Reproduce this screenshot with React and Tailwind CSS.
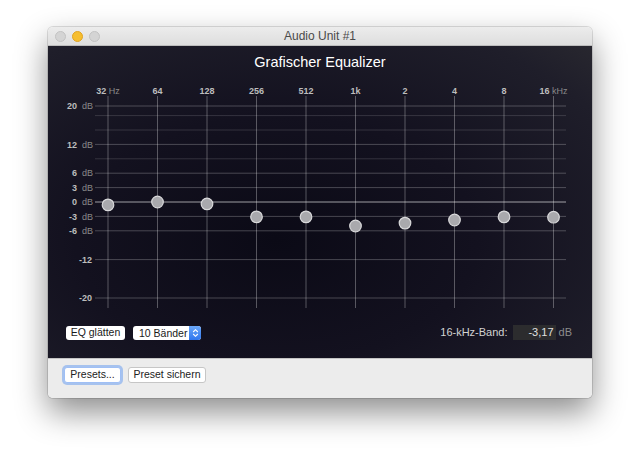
import React from "react";

const bands = [
  { n: "32", u: " Hz", v: -0.6 },
  { n: "64", v: 0 },
  { n: "128", v: -0.4 },
  { n: "256", v: -3.1 },
  { n: "512", v: -3.1 },
  { n: "1k", v: -5 },
  { n: "2", v: -4.4 },
  { n: "4", v: -3.75 },
  { n: "8", v: -3.1 },
  { n: "16", u: " kHz", v: -3.17 },
];

const yOf = (db) => 120 - 4.8 * db;

const labeled = [
  { db: 20, dB: true },
  { db: 12, dB: true },
  { db: 6, dB: true },
  { db: 3, dB: true },
  { db: 0, dB: true },
  { db: -3, dB: true },
  { db: -6, dB: true },
  { db: -12, dB: false },
  { db: -20, dB: false },
];
const extra = [18, 15, 9];

function Chart() {
  const xs = bands.map((_, i) => 60 + i * 49.5);
  return (
    <svg width="544" height="228" className="block" style={{ fontFamily: '"Liberation Sans", Arial, sans-serif' }}>
      {extra.map((d) => (
        <line key={"e" + d} x1="47" x2="518" y1={yOf(d)} y2={yOf(d)} stroke="rgba(255,255,255,0.14)" strokeWidth="1" />
      ))}
      {labeled.map((l) => (
        <line
          key={"l" + l.db}
          x1="47"
          x2="518"
          y1={yOf(l.db)}
          y2={yOf(l.db)}
          stroke={l.db === 0 ? "rgba(255,255,255,0.6)" : "rgba(255,255,255,0.24)"}
          strokeWidth="1"
        />
      ))}
      {xs.map((x, i) => (
        <line key={"v" + i} x1={x} x2={x} y1="14" y2="226" stroke="rgba(255,255,255,0.3)" strokeWidth="1" />
      ))}
      {bands.map((b, i) => (
        <text key={"t" + i} x={xs[i]} y="11.5" textAnchor="middle" fontSize="9" fontWeight="bold" fill="#bdbdbd">
          {b.n}
          {b.u && (
            <tspan fill="#8a8a8a" fontWeight="normal">
              {b.u}
            </tspan>
          )}
        </text>
      ))}
      {labeled.map((l) =>
        l.dB ? (
          <g key={"lt" + l.db}>
            <text x="29" y={yOf(l.db) + 3.2} textAnchor="end" fontSize="9" fontWeight="bold" fill="#bdbdbd">
              {l.db}
            </text>
            <text x="34" y={yOf(l.db) + 3.2} fontSize="9" fill="#8a8a8a">
              dB
            </text>
          </g>
        ) : (
          <text key={"lt" + l.db} x="44" y={yOf(l.db) + 3.2} textAnchor="end" fontSize="9" fontWeight="bold" fill="#bdbdbd">
            {l.db}
          </text>
        )
      )}
      {bands.map((b, i) => (
        <circle key={"k" + i} cx={xs[i]} cy={yOf(b.v)} r="5.8" fill="#a9a9ad" stroke="#d8d8da" strokeWidth="1.2" />
      ))}
    </svg>
  );
}

export default function App() {
  return (
    <div
      className="w-[640px] h-[467px] bg-white pt-[27px] pl-[48px] overflow-hidden"
      style={{ fontFamily: '"Liberation Sans", Arial, sans-serif' }}
    >
      <div className="w-[544px] h-[371px] rounded-[5px] overflow-hidden flex flex-col shadow-[0_14px_32px_rgba(0,0,0,0.45),0_0_0_1px_rgba(0,0,0,0.12)]">
        {/* title bar */}
        <div className="h-[19px] shrink-0 bg-gradient-to-b from-[#ececec] to-[#dedede] border-b border-[#bdbdbd] relative flex items-center">
          <div className="flex gap-[6px] pl-[7px]">
            <div className="w-[11px] h-[11px] rounded-full bg-[#d4d4d4] border border-[#c2c2c2]" />
            <div className="w-[11px] h-[11px] rounded-full bg-[#f6be2f] border border-[#e0a323]" />
            <div className="w-[11px] h-[11px] rounded-full bg-[#d4d4d4] border border-[#c2c2c2]" />
          </div>
          <div className="absolute inset-0 flex items-center justify-center text-[12px] text-[#4a4a4a]">Audio Unit #1</div>
        </div>
        {/* dark panel */}
        <div className="h-[312px] shrink-0 flex flex-col bg-[radial-gradient(ellipse_at_42%_62%,#0b0a16_0%,#13111f_45%,#1f1e2a_85%,#28272f_100%)]">
          <div className="pt-[7px] h-[25px] leading-[18px] text-center text-white text-[14.5px]">Grafischer Equalizer</div>
          <div className="mt-[11px]">
            <Chart />
          </div>
          <div className="mt-[15px] flex items-center h-[15px] pl-[18px] pr-[20px]">
            <div className="h-[14px] w-[59px] rounded-[3px] bg-white flex items-center justify-center text-[10.5px] text-[#1a1a1a] whitespace-nowrap">
              EQ glätten
            </div>
            <div className="ml-[8px] h-[14px] w-[68px] rounded-[3px] bg-white flex items-center text-[10.5px] text-[#1a1a1a] overflow-hidden">
              <span className="flex-1 pl-[6px] whitespace-nowrap leading-[14px]">10 Bänder</span>
              <span className="w-[12px] h-full shrink-0 bg-gradient-to-b from-[#6aa7f8] to-[#2f76ee] flex items-center justify-center">
                <svg width="7" height="10" viewBox="0 0 7 10">
                  <path d="M1.2 4 L3.5 1.7 L5.8 4 M1.2 6 L3.5 8.3 L5.8 6" fill="none" stroke="white" strokeWidth="1.1" />
                </svg>
              </span>
            </div>
            <div className="flex-1" />
            <span className="text-[11px] text-[#d2d2d2] whitespace-nowrap">16-kHz-Band:</span>
            <div className="ml-[5px] h-[15px] w-[43px] bg-[#2c2c2e] text-right pr-[2px] text-[11px] text-[#e0e0e0] leading-[15px]">
              -3,17
            </div>
            <span className="ml-[3px] text-[11px] text-[#8c8c8c]">dB</span>
          </div>
        </div>
        {/* bottom bar */}
        <div className="flex-1 bg-[#ececec] border-t border-[#c4c4c4] flex items-start pt-[8px] pl-[16px] gap-[7px]">
          <div className="h-[16px] w-[57px] rounded-[3px] bg-white border border-[#9fbff5] shadow-[0_0_0_2px_rgba(110,160,240,0.55)] flex items-center justify-center text-[10.5px] text-[#222] whitespace-nowrap">
            Presets...
          </div>
          <div className="h-[16px] w-[78px] rounded-[3px] bg-white border border-[#c6c6c6] flex items-center justify-center text-[10.5px] text-[#222] whitespace-nowrap">
            Preset sichern
          </div>
        </div>
      </div>
    </div>
  );
}
